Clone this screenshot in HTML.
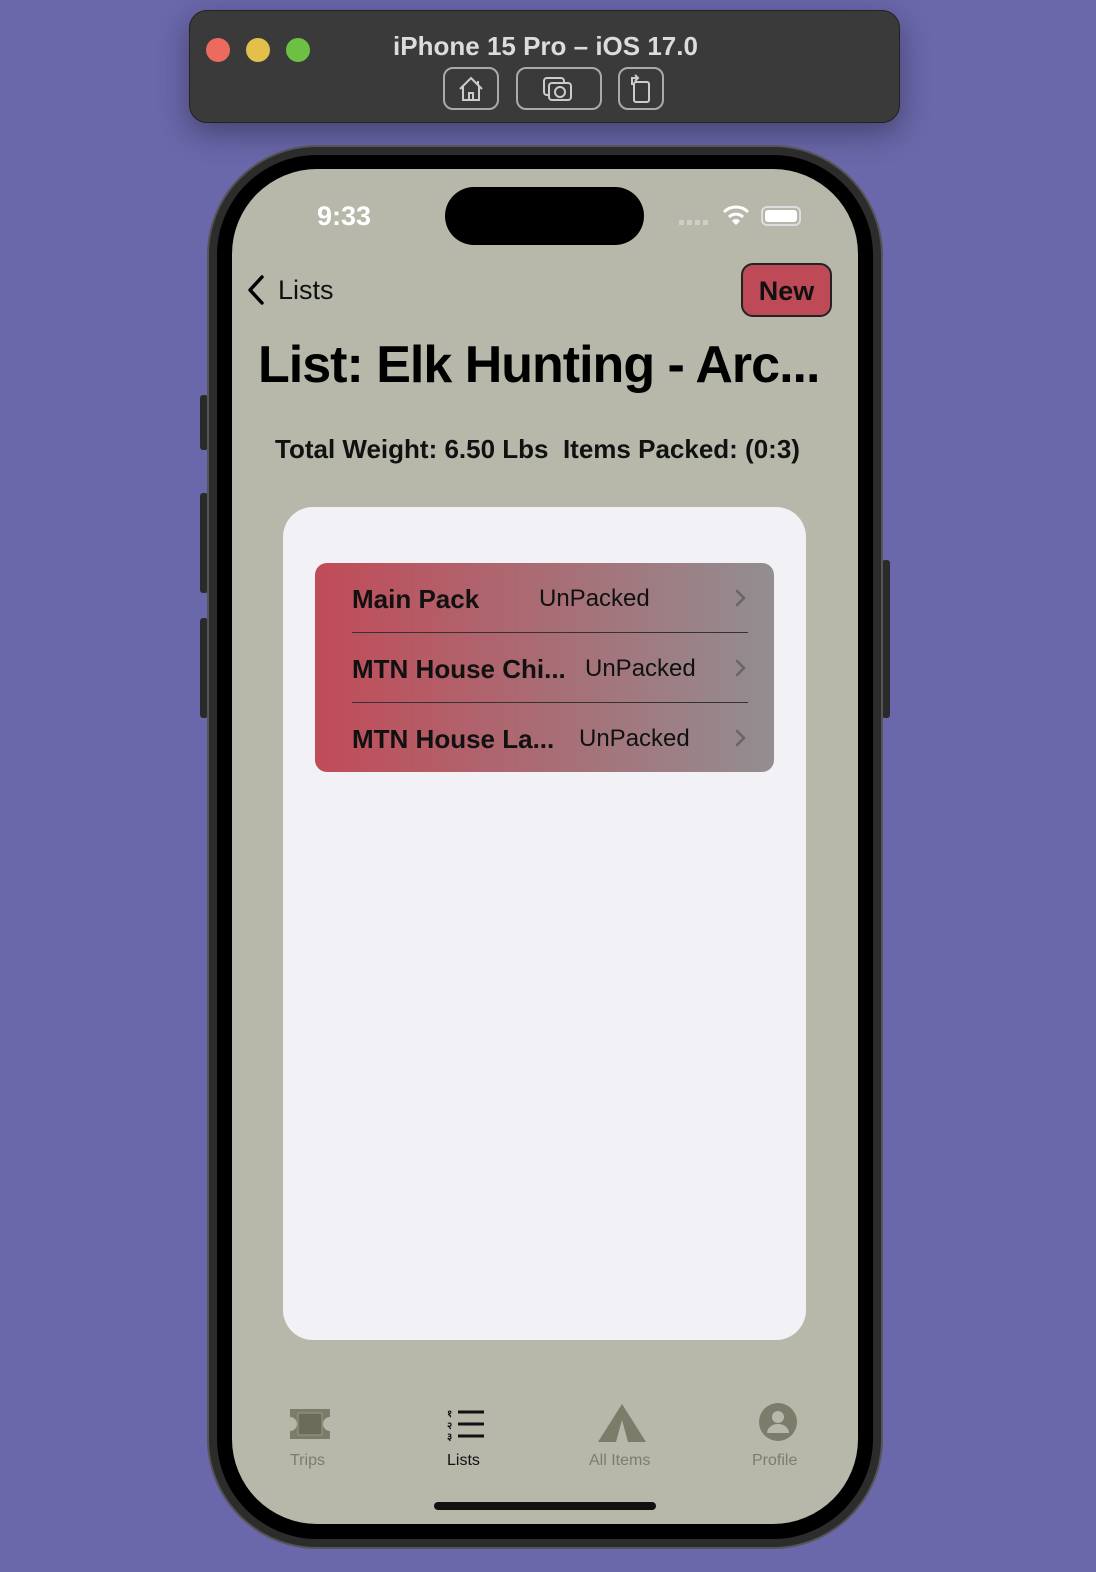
<!DOCTYPE html>
<html><head><meta charset="utf-8"><style>
*{margin:0;padding:0;box-sizing:border-box}
body{width:1096px;height:1572px;background:#6a67aa;position:relative;overflow:hidden;font-family:"Liberation Sans",sans-serif}
.abs{position:absolute}
.bar{left:189px;top:10px;width:711px;height:113px;background:#3a3a3a;border-radius:18px;border:1px solid #222;box-shadow:0 10px 30px rgba(0,0,0,.35)}
.dot{width:24px;height:24px;border-radius:50%;top:27px}
.title{top:20px;left:0;width:711px;text-align:center;color:#dcdcdc;font-weight:bold;font-size:26px}
.btn{border:2px solid #aaa;border-radius:10px;top:56px;height:43px}
.phone{left:207px;top:145px;width:676px;height:1404px;background:#2c2c2c;border-radius:110px;border:2px solid #555}
.phone2{left:217px;top:155px;width:656px;height:1384px;background:#000;border-radius:100px}
.screen{left:232px;top:169px;width:626px;height:1355px;background:#b7b8aa;border-radius:85px;overflow:hidden}
.side{background:#2a2a2a;width:8px;border-radius:3px}
</style></head><body>
<div class="abs bar">
 <div class="abs dot" style="left:16px;background:#ed6a5e"></div>
 <div class="abs dot" style="left:56px;background:#e3c04a"></div>
 <div class="abs dot" style="left:96px;background:#6cc043"></div>
 <div class="abs title">iPhone 15 Pro – iOS 17.0</div>
 <div class="abs btn" style="left:253px;width:56px"><svg width="52" height="40" viewBox="0 0 52 40"><path d="M15 20 L26 9 L37 20 M18 17 V31 H34 V17 M24 31 V24 H28 V31 M33 12 V16" stroke="#ccc" stroke-width="2" fill="none"/></svg></div>
 <div class="abs btn" style="left:326px;width:86px"><svg width="82" height="40" viewBox="0 0 82 40"><rect x="26" y="9" width="20" height="17" rx="3" stroke="#ccc" stroke-width="2" fill="none"/><rect x="31" y="14" width="22" height="17" rx="3" stroke="#ccc" stroke-width="2" fill="#3a3a3a"/><circle cx="42" cy="23" r="5" stroke="#ccc" stroke-width="2" fill="none"/></svg></div>
 <div class="abs btn" style="left:428px;width:46px"><svg width="42" height="40" viewBox="0 0 42 40"><rect x="14" y="13" width="15" height="20" rx="2" stroke="#ccc" stroke-width="2" fill="none"/><path d="M12 16 V9 H18 M15 6 L18 9 L15 12" stroke="#ccc" stroke-width="2" fill="none"/></svg></div>
</div>
<div class="abs side" style="left:200px;top:395px;height:55px"></div>
<div class="abs side" style="left:200px;top:493px;height:100px"></div>
<div class="abs side" style="left:200px;top:618px;height:100px"></div>
<div class="abs side" style="left:882px;top:560px;height:158px"></div>
<div class="abs phone"></div>
<div class="abs phone2"></div>
<div class="abs screen">
 <div class="abs" style="left:85px;top:32px;color:#fff;font-size:27px;font-weight:bold">9:33</div>
 <div class="abs" style="left:213px;top:18px;width:199px;height:58px;background:#000;border-radius:29px"></div>
 <div class="abs" style="left:447px;top:51px;width:32px;height:5px;background:repeating-linear-gradient(90deg,#cfcfc5 0 5px,transparent 5px 8px)"></div>
 <svg class="abs" style="left:490px;top:35px" width="28" height="22" viewBox="0 0 28 22"><path d="M2 8 A17 17 0 0 1 26 8" stroke="#fff" stroke-width="3" fill="none"/><path d="M7 13 A10 10 0 0 1 21 13" stroke="#fff" stroke-width="3" fill="none"/><path d="M10 17 L14 21 L18 17 A5 5 0 0 0 10 17Z" fill="#fff"/></svg>
 <div class="abs" style="left:529px;top:37px;width:40px;height:20px;border:2px solid #ddd;border-radius:6px;padding:2px"><div style="background:#fff;width:100%;height:100%;border-radius:3px"></div></div>
 <svg class="abs" style="left:14px;top:105px" width="20" height="32" viewBox="0 0 20 32"><path d="M16 3 L4 16 L16 29" stroke="#000" stroke-width="3.5" fill="none" stroke-linecap="round" stroke-linejoin="round"/></svg>
 <div class="abs" style="left:46px;top:106px;font-size:27px;color:#111">Lists</div>
 <div class="abs" style="left:509px;top:94px;width:91px;height:54px;background:#be4a57;border:2px solid #222;border-radius:12px;text-align:center;line-height:52px;font-size:27px;font-weight:bold;color:#111">New</div>
 <div class="abs" style="left:26px;top:166px;font-size:52px;font-weight:bold;color:#000;letter-spacing:-1px">List: Elk Hunting - Arc...</div>
 <div class="abs" style="left:43px;top:265px;font-size:26px;font-weight:bold;color:#111">Total Weight: 6.50 Lbs&nbsp; Items Packed: (0:3)</div>
 <div class="abs" style="left:51px;top:338px;width:523px;height:833px;background:#f2f1f6;border-radius:30px">
  <div class="abs" style="left:32px;top:56px;width:459px;height:209px;border-radius:12px;background:linear-gradient(90deg,#c14b58,#928e91);font-size:26px;color:#111">
   <div class="abs" style="left:37px;top:69px;width:396px;height:1px;background:#333"></div>
   <div class="abs" style="left:37px;top:139px;width:396px;height:1px;background:#333"></div>
   <div class="abs" style="left:37px;top:21px;font-weight:bold">Main Pack</div><div class="abs" style="left:224px;top:22px;font-size:24px">UnPacked</div>
   <div class="abs" style="left:37px;top:91px;font-weight:bold">MTN House Chi...</div><div class="abs" style="left:270px;top:92px;font-size:24px">UnPacked</div>
   <div class="abs" style="left:37px;top:161px;font-weight:bold">MTN House La...</div><div class="abs" style="left:264px;top:162px;font-size:24px">UnPacked</div>
   <svg class="abs" style="left:419px;top:25px" width="14" height="170" viewBox="0 0 14 170"><g stroke="#666" stroke-width="2.5" fill="none" stroke-linecap="round"><path d="M3 3 L10 10 L3 17"/><path d="M3 73 L10 80 L3 87"/><path d="M3 143 L10 150 L3 157"/></g></svg>
  </div>
 </div>
 <svg class="abs" style="left:54px;top:1236px" width="48" height="38" viewBox="0 0 48 38"><path d="M4 4 H44 V12 A6 6 0 0 0 44 26 V34 H4 V26 A6 6 0 0 0 4 12Z" fill="#7b7d6a"/><rect x="12" y="8" width="24" height="22" fill="#6b6d5a" stroke="#9a9c88"/></svg>
 <div class="abs" style="left:58px;top:1283px;font-size:16px;color:#7b7d6a">Trips</div>
 <svg class="abs" style="left:213px;top:1236px" width="40" height="38" viewBox="0 0 40 38"><g stroke="#111" stroke-width="3"><path d="M13 7H39M13 19H39M13 31H39"/></g><text x="2" y="12" font-size="10" font-weight="bold" fill="#111">१</text><text x="2" y="24" font-size="10" font-weight="bold" fill="#111">२</text><text x="2" y="35" font-size="10" font-weight="bold" fill="#111">३</text></svg>
 <div class="abs" style="left:215px;top:1283px;font-size:16px;color:#111">Lists</div>
 <svg class="abs" style="left:360px;top:1231px" width="60" height="46" viewBox="0 0 60 46"><path d="M30 4 L54 42 H6Z" fill="#7b7d6a"/><path d="M30 20 L36 42 H24Z" fill="#b7b8aa"/></svg>
 <div class="abs" style="left:357px;top:1283px;font-size:16px;color:#7b7d6a">All Items</div>
 <svg class="abs" style="left:526px;top:1233px" width="40" height="40" viewBox="0 0 40 40"><circle cx="20" cy="20" r="19" fill="#7b7d6a"/><circle cx="20" cy="15" r="6" fill="#b7b8aa"/><path d="M9 31 A11 9 0 0 1 31 31Z" fill="#b7b8aa"/></svg>
 <div class="abs" style="left:520px;top:1283px;font-size:16px;color:#7b7d6a">Profile</div>
 <div class="abs" style="left:202px;top:1333px;width:222px;height:8px;background:#111;border-radius:4px"></div>
</div>
</body></html>
